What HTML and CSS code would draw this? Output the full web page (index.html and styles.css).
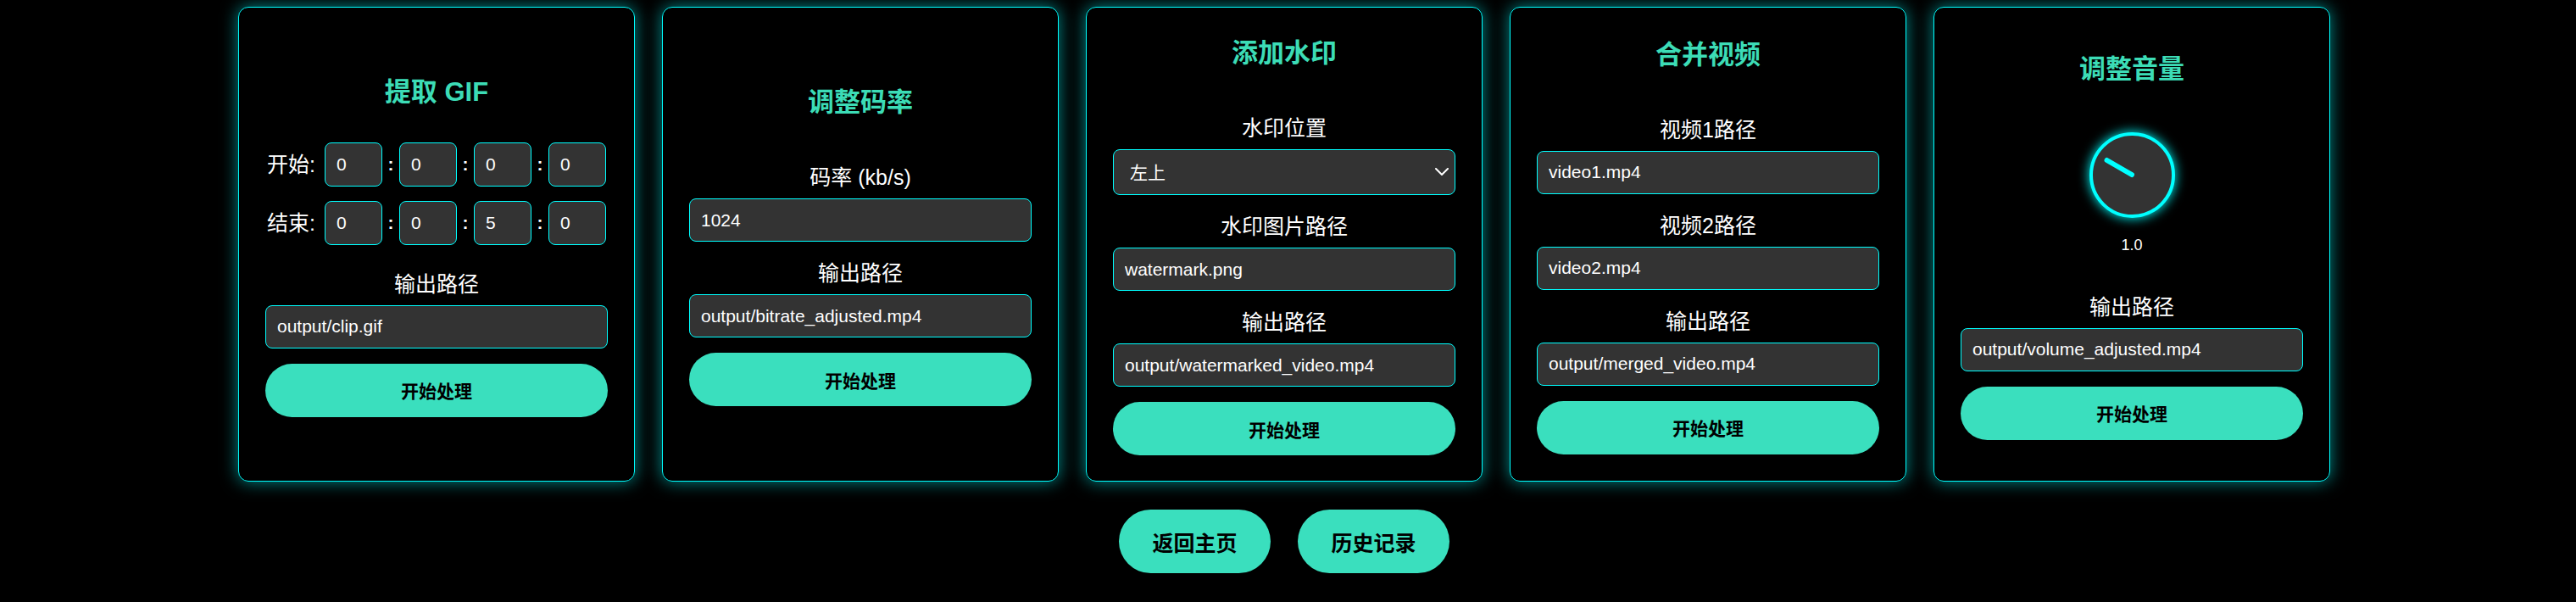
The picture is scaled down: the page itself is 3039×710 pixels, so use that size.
FILE: index.html
```html
<!DOCTYPE html>
<html lang="zh-CN">
<head>
<meta charset="utf-8">
<title>视频工具</title>
<link rel="stylesheet" href="styles.css">
</head>
<body>
<div class="page">
  <div class="cards">
    <div class="card">
      <h2 class="card-title title-gif">提取 GIF</h2>
      <div class="time-group">
        <div class="time-row">
          <span class="time-label">开始:</span>
          <input class="time-input" type="text" value="0"><span class="colon">:</span>
          <input class="time-input" type="text" value="0"><span class="colon">:</span>
          <input class="time-input" type="text" value="0"><span class="colon">:</span>
          <input class="time-input" type="text" value="0">
        </div>
        <div class="time-row">
          <span class="time-label">结束:</span>
          <input class="time-input" type="text" value="0"><span class="colon">:</span>
          <input class="time-input" type="text" value="0"><span class="colon">:</span>
          <input class="time-input" type="text" value="5"><span class="colon">:</span>
          <input class="time-input" type="text" value="0">
        </div>
      </div>
      <div class="field field-last">
        <label class="label">输出路径</label>
        <input class="text-input" type="text" value="output/clip.gif">
      </div>
      <button class="btn-process">开始处理</button>
    </div>

    <div class="card">
      <h2 class="card-title">调整码率</h2>
      <div class="field">
        <label class="label">码率 (kb/s)</label>
        <input class="text-input" type="text" value="1024">
      </div>
      <div class="field field-last">
        <label class="label">输出路径</label>
        <input class="text-input" type="text" value="output/bitrate_adjusted.mp4">
      </div>
      <button class="btn-process">开始处理</button>
    </div>

    <div class="card">
      <h2 class="card-title">添加水印</h2>
      <div class="field">
        <label class="label">水印位置</label>
        <div class="select-wrap">
          <select class="select">
            <option>左上</option>
            <option>右上</option>
            <option>左下</option>
            <option>右下</option>
          </select>
          <svg class="chev" viewBox="0 0 16 9" width="16" height="9"><path d="M1 1 L8 8 L15 1" fill="none" stroke="#fff" stroke-width="2" stroke-linecap="round" stroke-linejoin="round"/></svg>
        </div>
      </div>
      <div class="field">
        <label class="label">水印图片路径</label>
        <input class="text-input" type="text" value="watermark.png">
      </div>
      <div class="field field-last">
        <label class="label">输出路径</label>
        <input class="text-input" type="text" value="output/watermarked_video.mp4">
      </div>
      <button class="btn-process">开始处理</button>
    </div>

    <div class="card">
      <h2 class="card-title">合并视频</h2>
      <div class="field">
        <label class="label">视频1路径</label>
        <input class="text-input" type="text" value="video1.mp4">
      </div>
      <div class="field">
        <label class="label">视频2路径</label>
        <input class="text-input" type="text" value="video2.mp4">
      </div>
      <div class="field field-last">
        <label class="label">输出路径</label>
        <input class="text-input" type="text" value="output/merged_video.mp4">
      </div>
      <button class="btn-process">开始处理</button>
    </div>

    <div class="card">
      <h2 class="card-title title-volume">调整音量</h2>
      <div class="knob"><span class="knob-indicator"></span></div>
      <div class="knob-value">1.0</div>
      <div class="field field-last">
        <label class="label">输出路径</label>
        <input class="text-input" type="text" value="output/volume_adjusted.mp4">
      </div>
      <button class="btn-process">开始处理</button>
    </div>
  </div>

  <div class="nav">
    <button class="nav-btn">返回主页</button>
    <button class="nav-btn">历史记录</button>
  </div>
</div>
</body>
</html>
```

FILE: styles.css
```css
* {
  box-sizing: border-box;
}

body {
  margin: 0;
  background: #000;
  color: #fff;
  font-family: "Liberation Sans", "Noto Sans CJK SC", sans-serif;
}

.page {
  padding-top: 8px;
}

.cards {
  display: flex;
  justify-content: center;
  gap: 32px;
  padding-right: 9px;
}

.card {
  width: 468px;
  height: 560px;
  border: 1px solid #00ffff;
  border-radius: 12px;
  box-shadow: 0 0 20px rgba(0, 255, 255, 0.55);
  padding: 0 31px;
  display: flex;
  flex-direction: column;
  justify-content: center;
}

.card-title {
  margin: 0 0 48px;
  font-size: 31px;
  line-height: 48px;
  font-weight: bold;
  text-align: center;
  color: #3cdcb6;
}

.title-gif {
  margin-bottom: 35px;
}

.title-volume {
  margin-bottom: 50px;
}

.field {
  display: flex;
  flex-direction: column;
  margin-bottom: 21px;
}

.field-last {
  margin-bottom: 18px;
}

.label {
  font-size: 25px;
  line-height: 32px;
  text-align: center;
  margin-bottom: 9px;
}

.text-input,
.select,
.time-input {
  background: #333;
  border: 1px solid #00ffff;
  border-radius: 8px;
  color: #fff;
  font-family: "Liberation Sans", "Noto Sans CJK SC", sans-serif;
  font-size: 21px;
  outline: none;
}

.text-input {
  width: 100%;
  height: 51px;
  padding: 0 13px;
}

.select-wrap {
  position: relative;
}

.select {
  width: 100%;
  height: 54px;
  padding: 0 40px 0 19px;
  appearance: none;
  -webkit-appearance: none;
}

.chev {
  position: absolute;
  right: 8px;
  top: 22px;
  pointer-events: none;
}

.btn-process {
  width: 100%;
  height: 63px;
  border: none;
  border-radius: 32px;
  background: #3adfbe;
  color: #000;
  font-family: "Liberation Sans", "Noto Sans CJK SC", sans-serif;
  font-size: 21px;
  font-weight: bold;
}

.time-group {
  margin-bottom: 30px;
}

.time-row {
  display: flex;
  align-items: center;
  justify-content: center;
}

.time-row + .time-row {
  margin-top: 17px;
}

.time-label {
  font-size: 25px;
  line-height: 32px;
  margin-right: 11px;
}

.time-input {
  width: 68px;
  height: 52px;
  padding: 0 13px;
}

.colon {
  width: 20px;
  text-align: center;
  font-size: 21px;
  font-weight: bold;
}

.knob {
  position: relative;
  width: 101px;
  height: 101px;
  margin: 0 auto 22px;
  border-radius: 50%;
  border: 4px solid #00ffff;
  background: #333;
  box-shadow: 0 0 14px #00ffff;
}

.knob-indicator {
  position: absolute;
  left: calc(50% - 3px);
  bottom: calc(50% - 3px);
  width: 6px;
  height: 40px;
  border-radius: 3px;
  background: #00ffff;
  transform-origin: 50% calc(100% - 3px);
  transform: rotate(-60deg);
}

.knob-value {
  font-size: 18px;
  line-height: 21px;
  text-align: center;
  margin-bottom: 46px;
}

.nav {
  display: flex;
  justify-content: center;
  gap: 32px;
  margin-top: 33px;
  padding-right: 9px;
}

.nav-btn {
  width: 179px;
  height: 75px;
  border: none;
  border-radius: 38px;
  background: #3adfbe;
  color: #000;
  font-family: "Liberation Sans", "Noto Sans CJK SC", sans-serif;
  font-size: 25px;
  font-weight: bold;
}
```
